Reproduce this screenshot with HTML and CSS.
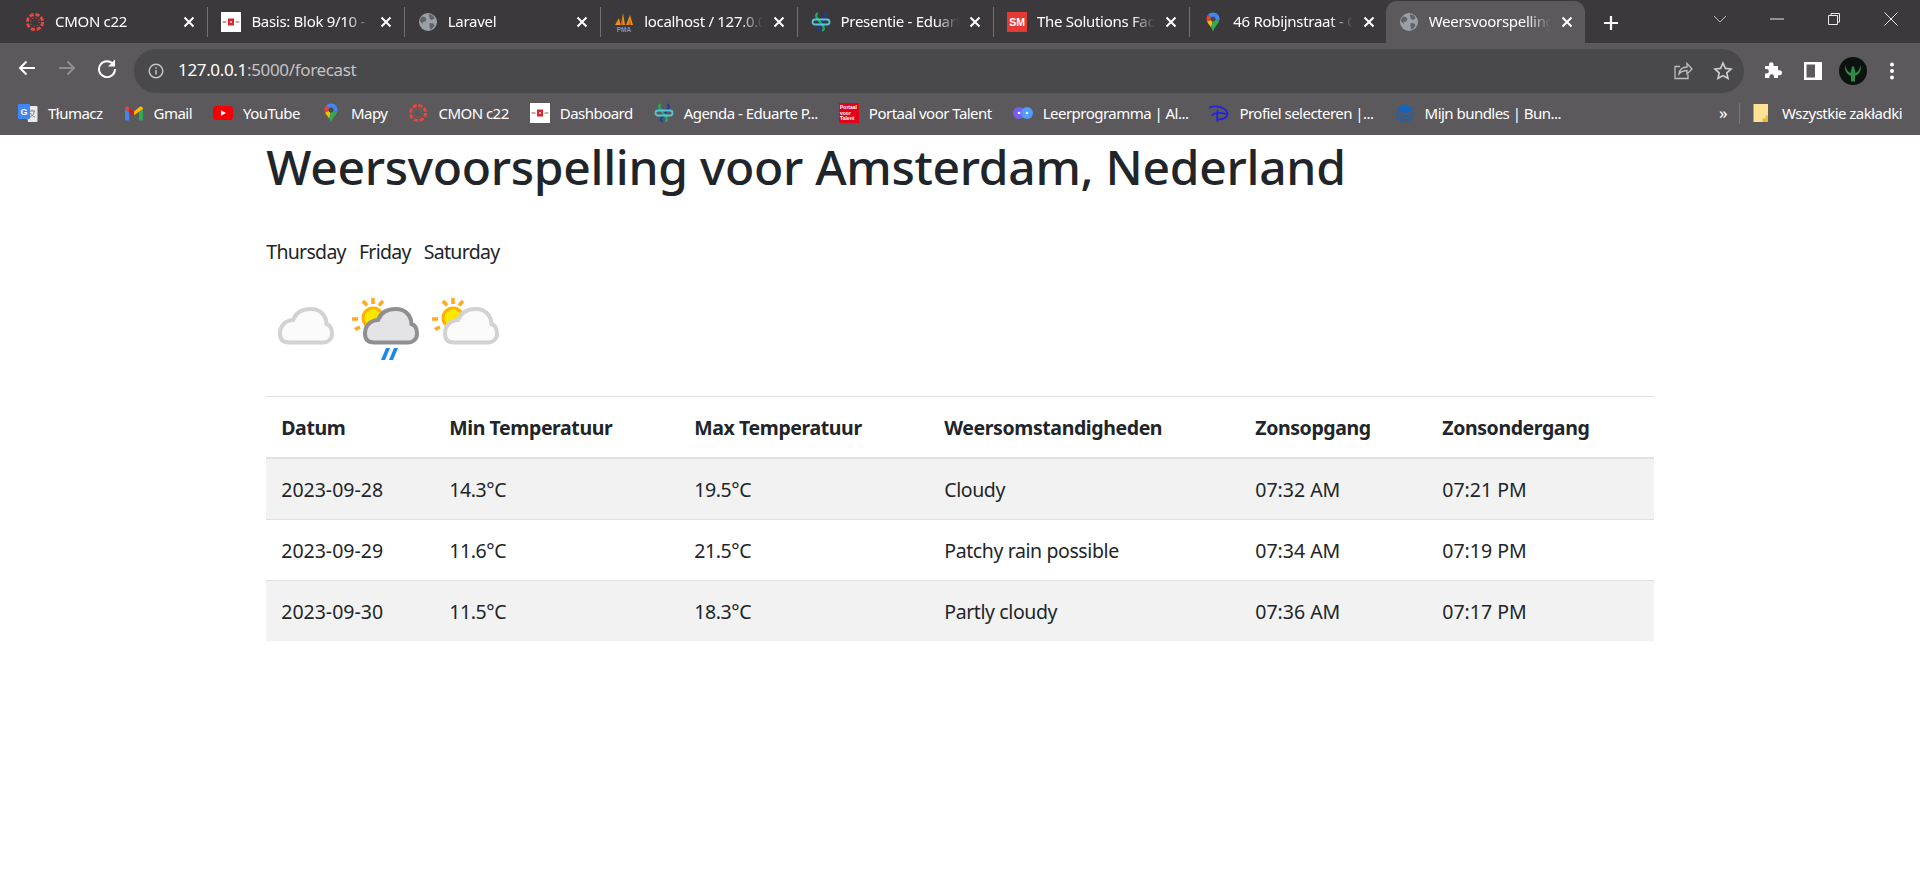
FILE: index.html
```html
<!DOCTYPE html>
<html lang="nl">
<head>
    <meta charset="UTF-8">
    <title>Weersvoorspelling</title>
    <link rel="stylesheet" href="styles.css">
</head>
<body>
<svg class="defs" width="0" height="0">
    <symbol id="i-canvas" viewBox="0 0 20 20">
        <circle cx="10" cy="10" r="7.6" fill="none" stroke="#e5483c" stroke-width="3" stroke-dasharray="4.2 1.8"/>
        <circle cx="10" cy="10" r="4.3" fill="none" stroke="#e5483c" stroke-width="1" stroke-dasharray="1.2 2.2"/>
    </symbol>
    <symbol id="i-basis" viewBox="0 0 20 20">
        <rect width="20" height="20" fill="#fff"/>
        <rect x="7" y="6.500" width="6" height="7" fill="#d9262e"/>
        <rect x="9" y="9" width="2" height="2" fill="#f6b8b8"/>
        <rect x="1.500" y="9" width="4" height="2" fill="#e69a96"/>
        <rect x="14.500" y="9" width="4" height="2" fill="#c9b9a2"/>
    </symbol>
    <symbol id="i-globe" viewBox="0 0 20 20">
        <circle cx="10" cy="10" r="9" fill="#9aa0a6"/>
        <path d="M4 4.500l3 .5 1.500 2-1 2.500-2.500.5-.5 2-3-3.500zM11 2l4 1.500 1.500 3-3 1.500-2-1.500zM11.500 11l4 .5 1 2-3 4-1.500-.5-.5-3z" fill="#5f6368"/>
    </symbol>
    <symbol id="i-pma" viewBox="0 0 20 20">
        <path d="M1 13L5 6l1.500 7zM7 13L9 1l2 12zM12 13L16 3l3 10z" fill="#f29111"/>
        <path d="M6 13L8.500 6 9 13zM14 13l2-6 1 6z" fill="#c9690c"/>
        <text x="10" y="19.500" class="fav-text pma">PMA</text>
    </symbol>
    <symbol id="i-eduarte" viewBox="0 0 20 20">
        <path d="M13 1.500C15 1.500 15.500 4 14 6l-6 8c-1.500 2-1 4.500 1 4.500" fill="none" stroke="#1f3c9c" stroke-width="2.200"/>
        <path d="M7 1.500C5 1.500 4.500 4 6 6l6 8c1.500 2 1 4.500-1 4.500" fill="none" stroke="#17b26a" stroke-width="2.200"/>
        <rect x="1.500" y="7.500" width="17" height="5" rx="2.500" fill="none" stroke="#58c6d6" stroke-width="1.800"/>
    </symbol>
    <symbol id="i-sm" viewBox="0 0 20 20">
        <rect width="20" height="20" fill="#e53935"/>
        <text x="10" y="14" class="fav-text sm">SM</text>
    </symbol>
    <symbol id="i-maps" viewBox="0 0 20 20">
        <path d="M5 2.800C6.200 1.400 8 .5 10 .5c3.700 0 6.500 2.800 6.500 6.500 0 .6-.1 1.200-.2 1.700L10 7z" fill="#4285f4"/>
        <path d="M5 2.800C4 3.900 3.500 5.400 3.500 7c0 1 .2 1.900.6 2.700L10 7z" fill="#ea4335"/>
        <path d="M4.100 9.700c1 2.200 3 4 4.200 6L10 7z" fill="#fbbc04"/>
        <path d="M16.300 8.700c-.9 3-4.700 5.800-6.300 11-.3-1.500-1-2.800-1.700-4L10 7z" fill="#34a853"/>
        <circle cx="10" cy="7" r="2.500" fill="#4a484b"/>
    </symbol>
    <symbol id="i-translate" viewBox="0 0 20 20">
        <path d="M8 3h10.500a1 1 0 0 1 1 1v14a1 1 0 0 1-1 1H10z" fill="#e8eaed"/>
        <path d="M11 8h6M14 6.500v1.500M12 14c2.500-1 4-3 4.300-6M12.500 10c.8 2 2.500 3.500 4.500 4" fill="none" stroke="#80868b" stroke-width="1"/>
        <rect y="1" width="12" height="15" rx="1" fill="#4285f4"/>
        <text x="6" y="12" class="fav-text tr">G</text>
    </symbol>
    <symbol id="i-gmail" viewBox="0 0 20 20">
        <path d="M1 6v10.500a1 1 0 0 0 1 1h3V9z" fill="#4285f4"/>
        <path d="M19 6v10.500a1 1 0 0 1-1 1h-3V9z" fill="#34a853"/>
        <path d="M1 6c0-2 2-3 3.500-2L10 8.500v3.700L1 6z" fill="#ea4335"/>
        <path d="M19 6c0-2-2-3-3.500-2L10 8.500v3.700L19 6z" fill="#fbbc04"/>
        <path d="M5 5v5l5 3.500V8.500z" fill="#c5221f"/>
    </symbol>
    <symbol id="i-youtube" viewBox="0 0 20 20">
        <rect y="3" width="20" height="14" rx="3.500" fill="#f40000"/>
        <path d="M8 7.200l5 2.800-5 2.800z" fill="#fff"/>
    </symbol>
    <symbol id="i-portaal" viewBox="0 0 20 20">
        <rect width="20" height="20" fill="#e2001a"/>
        <text x="1" y="6" class="fav-text pt">Portaal</text>
        <text x="1" y="11.500" class="fav-text pt">voor</text>
        <text x="1" y="17" class="fav-text pt">Talent</text>
    </symbol>
    <symbol id="i-leer" viewBox="0 0 20 20">
        <circle cx="6" cy="10" r="6" fill="#7b5cf0"/>
        <circle cx="14" cy="10" r="6" fill="#4f9cf9"/>
        <circle cx="6" cy="10" r="1.300" fill="#fff"/>
        <circle cx="14" cy="10" r="1.300" fill="#fff"/>
    </symbol>
    <symbol id="i-disney" viewBox="0 0 20 20">
        <path d="M1 4.500C6 2 18 4 18.500 11c.3 4-5.500 6-10.500 5M8.500 8c-.5 3-.5 6 0 10M3 12c3-2.500 9-2.500 14-1" fill="none" stroke="#2222e6" stroke-width="1.800" stroke-linecap="round"/>
    </symbol>
    <symbol id="i-bundle" viewBox="0 0 20 20">
        <path d="M10 1l9 5-9 5-9-5z" fill="#1565b8"/>
        <path d="M1 9l9 5 9-5M1 12l9 5 9-5M1 15l9 4 9-4" fill="none" stroke="#1e5fae" stroke-width="1.300"/>
    </symbol>
    <symbol id="i-folder" viewBox="0 0 16 20">
        <path d="M.5 1h14.500v14l-4 4H.5z" fill="#fde293"/>
        <path d="M15 12.500v6.500H9.500v-3.500h3v-3z" fill="#e8b93b"/>
    </symbol>
    <symbol id="i-close" viewBox="0 0 14 14">
        <path d="M2.500 2.500l9 9M11.500 2.500l-9 9" fill="none" stroke="#fff" stroke-width="2"/>
    </symbol>
    <symbol id="w-cloud" viewBox="0 0 80 80">
        <path d="M23 60.500C16 60.500 14 56 14 51.500 14 44 19 38.500 27 38 30 30 37 27 45 27 53 27 60 32 60.500 42 64 43 66 47 66 52 66 57 62 60.500 57 60.500z"/>
    </symbol>
    <symbol id="w-sun" viewBox="0 0 80 80">
        <circle cx="22" cy="36" r="10" fill="#ffe600" stroke="#ffb300" stroke-width="3"/>
        <path d="M22 16v6M12 19l4 4.500M32 19l-4 4.500M1 37h6M4 47.500l5-2.500" fill="none" stroke="#ffa91f" stroke-width="3.500"/>
    </symbol>
</svg>

<header class="browser">
    <div class="tabstrip">
        <div class="tab">
            <svg class="fav"><use href="#i-canvas"/></svg>
            <span class="tab-title">CMON c22</span>
            <svg class="tab-close"><use href="#i-close"/></svg>
        </div>
        <div class="tab">
            <svg class="fav"><use href="#i-basis"/></svg>
            <span class="tab-title">Basis: Blok 9/10 - Cijfers</span>
            <svg class="tab-close"><use href="#i-close"/></svg>
        </div>
        <div class="tab">
            <svg class="fav"><use href="#i-globe"/></svg>
            <span class="tab-title">Laravel</span>
            <svg class="tab-close"><use href="#i-close"/></svg>
        </div>
        <div class="tab">
            <svg class="fav"><use href="#i-pma"/></svg>
            <span class="tab-title">localhost / 127.0.0.1 / weer</span>
            <svg class="tab-close"><use href="#i-close"/></svg>
        </div>
        <div class="tab">
            <svg class="fav"><use href="#i-eduarte"/></svg>
            <span class="tab-title">Presentie - Eduarte Portaal</span>
            <svg class="tab-close"><use href="#i-close"/></svg>
        </div>
        <div class="tab">
            <svg class="fav"><use href="#i-sm"/></svg>
            <span class="tab-title">The Solutions Factory</span>
            <svg class="tab-close"><use href="#i-close"/></svg>
        </div>
        <div class="tab no-sep">
            <svg class="fav"><use href="#i-maps"/></svg>
            <span class="tab-title">46 Robijnstraat - Google Maps</span>
            <svg class="tab-close"><use href="#i-close"/></svg>
        </div>
        <div class="tab active">
            <svg class="fav"><use href="#i-globe"/></svg>
            <span class="tab-title">Weersvoorspelling</span>
            <svg class="tab-close"><use href="#i-close"/></svg>
        </div>
        <svg class="new-tab" viewBox="0 0 18 18"><path d="M9 2v14M2 9h14" fill="none" stroke="#fff" stroke-width="2.200"/></svg>
        <div class="win-controls">
            <svg viewBox="0 0 14 14"><path d="M1 4l6 6 6-6" fill="none" stroke="#bdbcbe" stroke-width="1"/></svg>
            <svg viewBox="0 0 14 14"><path d="M0 7h14" fill="none" stroke="#e8e8e8" stroke-width="1"/></svg>
            <svg viewBox="0 0 14 14"><path d="M1.500 3.500h9v9h-9zM4 3.500V1.500h8.500v8.500h-2" fill="none" stroke="#e8e8e8" stroke-width="1"/></svg>
            <svg viewBox="0 0 14 14"><path d="M.5.500l13 13M13.500.500l-13 13" fill="none" stroke="#e8e8e8" stroke-width="1"/></svg>
        </div>
    </div>

    <div class="toolbar">
        <svg class="nav-btn" viewBox="0 0 20 20"><path d="M18 10H3M9.500 3.500L3 10l6.500 6.500" fill="none" stroke="#fff" stroke-width="2"/></svg>
        <svg class="nav-btn" viewBox="0 0 20 20"><path d="M2 10h15M10.500 3.500L17 10l-6.500 6.500" fill="none" stroke="#8e8d8f" stroke-width="2"/></svg>
        <svg class="nav-btn" viewBox="0 0 20 20"><path d="M16.500 6.500A8 8 0 1 0 18 11" fill="none" stroke="#fff" stroke-width="2"/><path d="M18 1.500v7h-7z" fill="#fff"/></svg>
        <div class="omnibox">
            <svg class="info" viewBox="0 0 16 16"><circle cx="8" cy="8" r="6.800" fill="none" stroke="#c4c3c5" stroke-width="1.500"/><path d="M8 7v4.500M8 4.200v1.600" stroke="#c4c3c5" stroke-width="1.500"/></svg>
            <span class="url"><span class="url-host">127.0.0.1</span>:5000/forecast</span>
            <svg class="omni-icon" viewBox="0 0 20 20"><path d="M7 5.500H2v12h13v-4M6 13c.5-4 3-7 8-7V2.500l5 5.500-5 5V9.500c-3.500 0-6 1-8 3.500z" fill="none" stroke="#bdbcbe" stroke-width="1.300"/></svg>
            <svg class="omni-icon" viewBox="0 0 20 20"><path d="M10 2l2.400 5.400 5.600.6-4.200 3.800 1.200 5.700L10 14.600l-5 2.900 1.200-5.700L2 8l5.600-.6z" fill="none" stroke="#d0cfd1" stroke-width="1.600"/></svg>
        </div>
        <svg class="tool-btn" viewBox="0 0 20 20"><path d="M3 6h4V4.500a2.300 2.300 0 0 1 4.600 0V6H16v4.200h1.500a2.500 2.500 0 0 1 0 5H16V18h-4v-1.500a2.300 2.300 0 0 0-4.600 0V18H3v-4.500h1.500a2.300 2.300 0 0 0 0-4.600H3z" fill="#fff" transform="translate(0 -1)"/></svg>
        <svg class="tool-btn" viewBox="0 0 20 20"><path d="M1 1h18v18H1zM3.500 3.500v13H12v-13z" fill="#fff" fill-rule="evenodd"/></svg>
        <svg class="avatar" viewBox="0 0 28 28">
            <circle cx="14" cy="14" r="14" fill="#0c120e"/>
            <path d="M6 8c-.5 6 2 9.500 6 11v5.500h4V19c4-1.500 6.500-5 6-11-1 4-3 7-5.500 8L15 9.500h-2L11.500 16C9 15 7 12 6 8z" fill="#2f8a4a"/>
        </svg>
        <svg class="tool-btn menu" viewBox="0 0 20 20"><circle cx="10" cy="3.500" r="2" fill="#fff"/><circle cx="10" cy="10" r="2" fill="#fff"/><circle cx="10" cy="16.500" r="2" fill="#fff"/></svg>
    </div>

    <nav class="bookmarks">
        <a class="bm"><svg class="fav"><use href="#i-translate"/></svg>Tłumacz</a>
        <a class="bm"><svg class="fav"><use href="#i-gmail"/></svg>Gmail</a>
        <a class="bm"><svg class="fav"><use href="#i-youtube"/></svg>YouTube</a>
        <a class="bm"><svg class="fav"><use href="#i-maps"/></svg>Mapy</a>
        <a class="bm"><svg class="fav"><use href="#i-canvas"/></svg>CMON c22</a>
        <a class="bm"><svg class="fav"><use href="#i-basis"/></svg>Dashboard</a>
        <a class="bm"><svg class="fav"><use href="#i-eduarte"/></svg>Agenda - Eduarte P...</a>
        <a class="bm"><svg class="fav"><use href="#i-portaal"/></svg>Portaal voor Talent</a>
        <a class="bm"><svg class="fav"><use href="#i-leer"/></svg>Leerprogramma | Al...</a>
        <a class="bm"><svg class="fav"><use href="#i-disney"/></svg>Profiel selecteren |...</a>
        <a class="bm"><svg class="fav"><use href="#i-bundle"/></svg>Mijn bundles | Bun...</a>
        <span class="bm-more">»</span>
        <span class="bm-sep"></span>
        <a class="bm bm-all"><svg class="fav-folder"><use href="#i-folder"/></svg>Wszystkie zakładki</a>
    </nav>
</header>

<main class="container">
    <h1>Weersvoorspelling voor Amsterdam, Nederland</h1>

    <div class="days">
        <span>Thursday</span>
        <span>Friday</span>
        <span>Saturday</span>
    </div>

    <div class="icons">
        <svg class="wicon"><use href="#w-cloud" class="cloud-light"/></svg>
        <svg class="wicon">
            <use href="#w-sun"/>
            <use href="#w-cloud" class="cloud-dark"/>
            <path d="M30 78l5-12h4l-5 12zM38 78l5-12h4l-5 12z" fill="#1e88e5"/>
        </svg>
        <svg class="wicon">
            <use href="#w-sun"/>
            <use href="#w-cloud" class="cloud-light"/>
        </svg>
    </div>

    <table class="forecast">
        <colgroup>
            <col class="c-date"><col class="c-min"><col class="c-max"><col class="c-cond"><col class="c-rise"><col class="c-set">
        </colgroup>
        <thead>
            <tr>
                <th>Datum</th>
                <th>Min Temperatuur</th>
                <th>Max Temperatuur</th>
                <th>Weersomstandigheden</th>
                <th>Zonsopgang</th>
                <th>Zonsondergang</th>
            </tr>
        </thead>
        <tbody>
            <tr>
                <td class="num">2023-09-28</td>
                <td>14.3°C</td>
                <td>19.5°C</td>
                <td>Cloudy</td>
                <td class="num">07:32 AM</td>
                <td class="num">07:21 PM</td>
            </tr>
            <tr>
                <td class="num">2023-09-29</td>
                <td>11.6°C</td>
                <td>21.5°C</td>
                <td>Patchy rain possible</td>
                <td class="num">07:34 AM</td>
                <td class="num">07:19 PM</td>
            </tr>
            <tr>
                <td class="num">2023-09-30</td>
                <td>11.5°C</td>
                <td>18.3°C</td>
                <td>Partly cloudy</td>
                <td class="num">07:36 AM</td>
                <td class="num">07:17 PM</td>
            </tr>
        </tbody>
    </table>
</main>
</body>
</html>
```

FILE: styles.css
```css
body {
    margin: 0;
    background: #fff;
    color: #212529;
    font-family: "Noto Sans", "Open Sans", sans-serif;
    font-size: 19.500px;
    line-height: 30px;
    letter-spacing: -0.4px;
    overflow: hidden;
}

.defs {
    position: absolute;
}

.browser {
    color: #fff;
    font-size: 15px;
    line-height: 20px;
    letter-spacing: -0.02em;
}

/* tab strip */
.tabstrip {
    display: flex;
    align-items: center;
    height: 43px;
    padding-left: 12px;
    background: #3b393c;
}

.tab {
    display: flex;
    align-items: center;
    flex: none;
    width: 196.4px;
    height: 30px;
    padding: 0 11px 0 13px;
    box-sizing: border-box;
    border-right: 1px solid #717072;
}

.tab.no-sep {
    border-right: 0;
}

.tab.active {
    width: 199px;
    height: 43px;
    margin-top: 1px;
    margin-left: -1px;
    background: #5b595c;
    border-right: 0;
    border-radius: 11px 11px 0 0;
}

.fav {
    flex: none;
    width: 20px;
    height: 20px;
}

.fav-text {
    text-anchor: middle;
    font-family: "Liberation Sans", sans-serif;
    font-weight: 700;
    letter-spacing: 0;
}

.fav-text.pma {
    font-size: 6.5px;
    fill: #7c93c4;
}

.fav-text.sm {
    font-size: 10.5px;
    fill: #fff;
}

.fav-text.tr {
    font-size: 9px;
    fill: #fff;
}

.fav-text.pt {
    font-size: 5px;
    text-anchor: start;
    fill: #fff;
}

.tab-title {
    flex: 1;
    min-width: 0;
    margin: -2px 9px 0 10px;
    overflow: hidden;
    white-space: nowrap;
    -webkit-mask-image: linear-gradient(to right, #000 80%, transparent 100%);
    mask-image: linear-gradient(to right, #000 80%, transparent 100%);
}

.tab-close {
    flex: none;
    width: 14px;
    height: 14px;
}

.new-tab {
    flex: none;
    width: 18px;
    height: 18px;
    margin: 2px 0 0 17px;
}

.win-controls {
    display: flex;
    gap: 43px;
    margin-left: auto;
    margin-right: 22px;
    margin-top: -6px;
}

.win-controls svg {
    width: 14px;
    height: 14px;
}

/* toolbar */
.toolbar {
    display: flex;
    align-items: center;
    height: 50px;
    padding: 0 18px 0 17px;
    box-sizing: border-box;
    background: #5b595c;
}

.nav-btn {
    flex: none;
    width: 20px;
    height: 20px;
    margin-right: 20px;
}

.omnibox {
    display: flex;
    align-items: center;
    flex: 1;
    height: 44px;
    margin: 6px 18px 0 -3px;
    padding: 0 11px 0 14px;
    background: #49484a;
    border-radius: 22px;
    font-size: 17px;
    letter-spacing: -0.02em;
    color: #c4c3c5;
}

.info {
    flex: none;
    width: 16px;
    height: 16px;
    margin-right: 14px;
}

.url {
    flex: 1;
    margin-top: -2px;
}

.url-host {
    color: #fff;
}

.omni-icon {
    flex: none;
    width: 20px;
    height: 20px;
    margin-left: 20px;
}

.tool-btn {
    flex: none;
    width: 20px;
    height: 20px;
    margin-top: 5px;
    margin-right: 21px;
}

.avatar {
    flex: none;
    width: 28px;
    height: 30px;
    margin-top: 5px;
    margin-left: -5px;
    margin-right: 15px;
}

.tool-btn.menu {
    margin-right: 0;
}

/* bookmarks bar */
.bookmarks {
    display: flex;
    align-items: center;
    height: 42px;
    padding: 0 18px 2px 18px;
    box-sizing: border-box;
    background: #5b595c;
    letter-spacing: -0.035em;
}

.bm {
    display: flex;
    align-items: center;
    gap: 10px;
    margin-right: 21px;
    white-space: nowrap;
}

.bm-more {
    margin-left: auto;
    font-size: 17px;
    margin-right: 12px;
}

.bm-sep {
    width: 1px;
    height: 21px;
    margin-right: 13px;
    background: #79787a;
}

.bm-all {
    margin-right: 0;
    gap: 13px;
}

.fav-folder {
    flex: none;
    width: 16px;
    height: 20px;
}

/* page */
.container {
    width: 1387.500px;
    margin: 0 auto;
}

h1 {
    margin: 0 0 40px;
    padding-top: 2px;
    font-size: 48px;
    font-weight: 500;
    line-height: 60px;
    letter-spacing: -0.3px;
}

.days {
    display: flex;
    gap: 13px;
    letter-spacing: -0.7px;
}

.icons {
    display: flex;
    margin: 15px 0 34px;
}

.wicon {
    flex: none;
    width: 80px;
    height: 80px;
}

.wicon + .wicon {
    margin-left: 5px;
}

.wicon + .wicon + .wicon {
    margin-left: 0;
}

.cloud-light {
    fill: #fbfbfb;
    stroke: #d2d2d2;
    stroke-width: 4px;
}

.cloud-dark {
    fill: #e4e4e6;
    stroke: #8f8f91;
    stroke-width: 4px;
}

.forecast {
    width: 100%;
    table-layout: fixed;
    border-collapse: collapse;
}

.c-date { width: 168px; }
.c-min { width: 245px; }
.c-max { width: 250px; }
.c-cond { width: 311px; }
.c-rise { width: 187px; }
.c-set { width: 226.500px; }

.forecast th,
.forecast td {
    padding: 16px 15px 14px;
    text-align: left;
    border-top: 1px solid #dee2e6;
}

.forecast th {
    border-bottom: 2px solid #dee2e6;
    font-weight: 700;
}

.forecast td.num {
    letter-spacing: 0;
}

.forecast tbody tr:nth-child(odd) td {
    background: #f2f2f2;
}
```
